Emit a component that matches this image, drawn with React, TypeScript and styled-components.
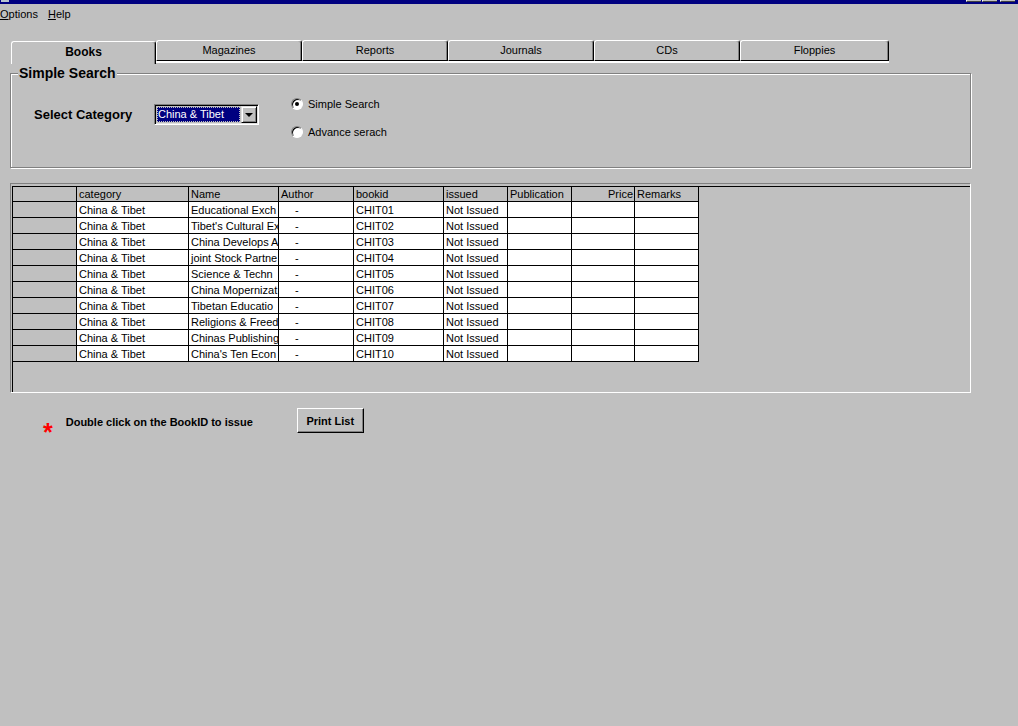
import React from "react";
import styled, { createGlobalStyle } from "styled-components";

const Global = createGlobalStyle`
  html, body { margin: 0; padding: 0; background: #c0c0c0; }
  body { font-family: "Liberation Sans", Arial, sans-serif; font-size: 11px; color: #000; }
  * { box-sizing: border-box; }
`;

const Window = styled.div`
  width: 1018px;
  height: 726px;
  background: #c0c0c0;
  overflow: hidden;
  display: flex;
  flex-direction: column;
`;

const TitleStrip = styled.div`
  height: 4px;
  flex: none;
  background: #000080;
  display: flex;
  align-items: flex-start;
  justify-content: space-between;
`;

const TitleIcon = styled.div`
  width: 8px;
  height: 2px;
  margin-left: 1px;
  background: #b8c4d0;
`;

const CaptionButtons = styled.div`
  display: flex;
  margin-right: 3px;
`;

const CaptionButton = styled.div<{ $gap: number }>`
  width: 15px;
  height: 2px;
  margin-left: ${(p) => p.$gap}px;
  background: #c0c0c0;
  border-bottom: 1px solid #404040;
  border-left: 1px solid #fff;
`;

const MenuBar = styled.div`
  height: 18px;
  flex: none;
  padding-top: 4px;
  display: flex;
  gap: 10px;
`;

const MenuItem = styled.span`
  font-size: 11px;
  line-height: 13px;
  u { text-decoration: underline; }
`;

const Content = styled.div`
  padding-left: 10px;
  margin-top: 18px;
  display: flex;
  flex-direction: column;
`;

const TabRow = styled.div`
  display: flex;
  align-items: flex-start;
  padding-left: 1px;
  height: 24px;
`;

const Tab = styled.div<{ $active?: boolean; $w: number }>`
  width: ${(p) => p.$w}px;
  height: ${(p) => (p.$active ? 23 : 21)}px;
  margin-top: ${(p) => (p.$active ? 1 : 0)}px;
  padding-bottom: ${(p) => (p.$active ? 2 : 0)}px;
  border-top: 1px solid #fff;
  border-left: 1px solid #fff;
  border-right: 1px solid #000;
  border-bottom: ${(p) => (p.$active ? "none" : "1px solid #000")};
  border-radius: 3px 3px 0 0;
  box-shadow: inset -1px 0 0 #808080${(p) => (p.$active ? "" : ", 0 2px 0 #fff")};
  display: flex;
  align-items: center;
  justify-content: center;
  font-size: ${(p) => (p.$active ? 12 : 11)}px;
  font-weight: ${(p) => (p.$active ? 700 : 400)};
  line-height: 13px;
`;

const GroupBox = styled.div`
  position: relative;
  margin-top: 9px;
  width: 961px;
  height: 95px;
  border: 1px solid #808080;
  box-shadow: inset 1px 1px 0 #fff, 1px 1px 0 #fff;
  display: flex;
  align-items: flex-start;
  padding: 23px 0 0 23px;
`;

const Legend = styled.span`
  position: absolute;
  top: -9px;
  left: 7px;
  padding: 0 1px;
  background: #c0c0c0;
  font-size: 14px;
  font-weight: 700;
  line-height: 16px;
`;

const CategoryGroup = styled.div`
  display: flex;
  align-items: center;
  margin-top: 7px;
`;

const FieldLabel = styled.span`
  width: 120px;
  font-size: 13px;
  font-weight: 700;
  line-height: 16px;
`;

const Combo = styled.div`
  width: 105px;
  height: 21px;
  padding: 1px;
  border: 1px solid;
  border-color: #808080 #fff #fff #808080;
  box-shadow: inset 1px 1px 0 #000, inset -1px -1px 0 #dfdfdf;
  display: flex;
`;

const ComboValue = styled.div`
  flex: 1;
  margin: 1px;
  background: #000080;
  color: #fff;
  outline: 1px dotted #c0c0c0;
  outline-offset: -1px;
  font-size: 11px;
  line-height: 15px;
  padding-left: 1px;
  white-space: nowrap;
  overflow: hidden;
`;

const ComboButton = styled.div`
  width: 16px;
  height: 17px;
  flex: none;
  background: #c0c0c0;
  border: 1px solid;
  border-color: #dfdfdf #000 #000 #dfdfdf;
  box-shadow: inset 1px 1px 0 #fff, inset -1px -1px 0 #808080;
  display: flex;
  align-items: center;
  justify-content: center;
  &::after {
    content: "";
    border-left: 4px solid transparent;
    border-right: 4px solid transparent;
    border-top: 4px solid #000;
    margin-top: 1px;
  }
`;

const RadioColumn = styled.div`
  display: flex;
  flex-direction: column;
  gap: 14px;
  margin-left: 32px;
`;

const RadioRow = styled.label`
  display: flex;
  align-items: center;
  height: 14px;
  gap: 5px;
  font-size: 11px;
  line-height: 13px;
`;

const RadioDot = styled.span<{ $checked?: boolean }>`
  position: relative;
  width: 12px;
  height: 12px;
  border-radius: 50%;
  background: #fff;
  border: 1px solid;
  border-color: #808080 #fff #fff #808080;
  box-shadow: inset 1px 1px 0 #000;
  &::after {
    content: "";
    display: ${(p) => (p.$checked ? "block" : "none")};
    position: absolute;
    left: 3px;
    top: 3px;
    width: 4px;
    height: 4px;
    border-radius: 50%;
    background: #000;
  }
`;

const GridFrame = styled.div`
  margin-top: 15px;
  width: 961px;
  height: 210px;
  border: 1px solid;
  border-color: #808080 #fff #fff #808080;
  padding: 2px 0 0 1px;
  display: flex;
  flex-direction: column;
`;

const GridArea = styled.div`
  flex: 1;
  border-top: 1px solid #000;
  border-left: 1px solid #000;
`;

const Table = styled.div`
  display: grid;
  width: max-content;
  grid-template-columns: 64px 112px 90px 75px 90px 64px 64px 63px 64px;
  grid-template-rows: 15px repeat(10, 16px);
`;

const Cell = styled.div<{ $kind: "head" | "rowhead" | "body"; $align?: "left" | "right"; $indent?: number }>`
  border-right: 1px solid #000;
  border-bottom: 1px solid #000;
  background: ${(p) => (p.$kind === "body" ? "#fff" : "#c0c0c0")};
  padding: ${(p) => (p.$kind === "head" ? "0" : "1px")} ${(p) => (p.$align === "right" ? 1 : 0)}px 0
    ${(p) => p.$indent ?? 2}px;
  text-align: ${(p) => p.$align ?? "left"};
  font-size: 11px;
  line-height: 14px;
  white-space: nowrap;
  overflow: hidden;
`;

const BottomRow = styled.div`
  display: flex;
  align-items: flex-start;
  padding-left: 33px;
`;

const Star = styled.span`
  color: #ff0000;
  font-size: 25px;
  font-weight: 700;
  line-height: 25px;
  margin-top: 27px;
`;

const Note = styled.span`
  width: 231px;
  margin-left: 13px;
  margin-top: 23px;
  font-size: 11px;
  font-weight: 700;
  line-height: 13px;
  white-space: nowrap;
`;

const PushButton = styled.button`
  margin-top: 15px;
  width: 67px;
  height: 25px;
  padding: 0;
  background: #c0c0c0;
  border: 1px solid;
  border-color: #fff #000 #000 #fff;
  box-shadow: inset -1px -1px 0 #808080;
  font-family: "Liberation Sans", Arial, sans-serif;
  font-size: 11px;
  font-weight: 700;
  color: #000;
`;

const tabs = [
  { label: "Books", w: 145, active: true },
  { label: "Magazines", w: 146 },
  { label: "Reports", w: 146 },
  { label: "Journals", w: 146 },
  { label: "CDs", w: 146 },
  { label: "Floppies", w: 149 },
];

const names = [
  "Educational Exch",
  "Tibet's Cultural Ex",
  "China Develops A",
  "joint Stock Partne",
  "Science & Techn",
  "China Mopernizat",
  "Tibetan Educatio",
  "Religions & Freed",
  "Chinas Publishing",
  "China's Ten Econ",
];

export default function App() {
  return (
    <Window>
      <Global />
      <TitleStrip>
        <TitleIcon />
        <CaptionButtons>
          <CaptionButton $gap={0} />
          <CaptionButton $gap={1} />
          <CaptionButton $gap={3} />
        </CaptionButtons>
      </TitleStrip>
      <MenuBar>
        <MenuItem>
          <u>O</u>ptions
        </MenuItem>
        <MenuItem>
          <u>H</u>elp
        </MenuItem>
      </MenuBar>
      <Content>
        <TabRow>
          {tabs.map((t) => (
            <Tab key={t.label} $w={t.w} $active={t.active}>
              {t.label}
            </Tab>
          ))}
        </TabRow>
        <GroupBox>
          <Legend>Simple Search</Legend>
          <CategoryGroup>
            <FieldLabel>Select Category</FieldLabel>
            <Combo>
              <ComboValue>China &amp; Tibet</ComboValue>
              <ComboButton />
            </Combo>
          </CategoryGroup>
          <RadioColumn>
            <RadioRow>
              <RadioDot $checked />
              Simple Search
            </RadioRow>
            <RadioRow>
              <RadioDot />
              Advance serach
            </RadioRow>
          </RadioColumn>
        </GroupBox>
        <GridFrame>
          <GridArea>
            <Table>
              <Cell $kind="head" />
              <Cell $kind="head">category</Cell>
              <Cell $kind="head">Name</Cell>
              <Cell $kind="head">Author</Cell>
              <Cell $kind="head">bookid</Cell>
              <Cell $kind="head">issued</Cell>
              <Cell $kind="head">Publication</Cell>
              <Cell $kind="head" $align="right">
                Price
              </Cell>
              <Cell $kind="head">Remarks</Cell>
              {names.map((n, i) => (
                <React.Fragment key={n}>
                  <Cell $kind="rowhead" />
                  <Cell $kind="body">China &amp; Tibet</Cell>
                  <Cell $kind="body">{n}</Cell>
                  <Cell $kind="body" $indent={16}>
                    -
                  </Cell>
                  <Cell $kind="body">CHIT{String(i + 1).padStart(2, "0")}</Cell>
                  <Cell $kind="body">Not Issued</Cell>
                  <Cell $kind="body" />
                  <Cell $kind="body" />
                  <Cell $kind="body" />
                </React.Fragment>
              ))}
            </Table>
          </GridArea>
        </GridFrame>
        <BottomRow>
          <Star>*</Star>
          <Note>Double click on the BookID to issue</Note>
          <PushButton>Print List</PushButton>
        </BottomRow>
      </Content>
    </Window>
  );
}
